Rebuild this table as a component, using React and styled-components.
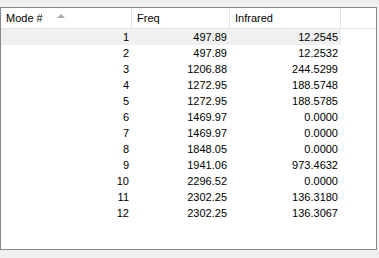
import React from "react";
import styled, { createGlobalStyle } from "styled-components";

const GlobalStyle = createGlobalStyle`
  html, body {
    margin: 0;
    padding: 0;
    background: #f0f0f0;
  }
  body {
    font-family: "Liberation Sans", Arial, sans-serif;
    font-size: 11px;
    color: #000;
  }
`;

const columns = [
  { key: "mode", title: "Mode #", width: 131, sorted: true },
  { key: "freq", title: "Freq", width: 98 },
  { key: "ir", title: "Infrared", width: 111 },
];

const rows = [
  [1, "497.89", "12.2545"],
  [2, "497.89", "12.2532"],
  [3, "1206.88", "244.5299"],
  [4, "1272.95", "188.5748"],
  [5, "1272.95", "188.5785"],
  [6, "1469.97", "0.0000"],
  [7, "1469.97", "0.0000"],
  [8, "1848.05", "0.0000"],
  [9, "1941.06", "973.4632"],
  [10, "2296.52", "0.0000"],
  [11, "2302.25", "136.3180"],
  [12, "2302.25", "136.3067"],
];

const App = () => {
  return (
    <Page>
      <GlobalStyle />
      <ListView>
        <Header>
          {columns.map((col) => (
            <HeaderCell key={col.key} $width={col.width}>
              {col.title}
              {col.sorted && <SortArrow />}
            </HeaderCell>
          ))}
          <HeaderFill />
        </Header>
        <Body>
          {rows.map((row, i) => (
            <Row key={row[0]} $selected={i === 0}>
              {row.map((val, j) => (
                <Cell key={j} $width={columns[j].width}>
                  {val}
                </Cell>
              ))}
            </Row>
          ))}
        </Body>
      </ListView>
    </Page>
  );
};

export default App;

const Page = styled.div`
  width: 379px;
  height: 258px;
  padding-top: 7px;
  box-sizing: border-box;
`;
const ListView = styled.div`
  width: 377px;
  height: 243px;
  box-sizing: border-box;
  border: 1px solid #828790;
  background: #fff;
  display: flex;
  flex-direction: column;
`;
const Header = styled.div`
  display: flex;
  height: 20px;
  border-bottom: 1px solid #e5e5e5;
  background: #fff;
`;
const HeaderCell = styled.div`
  width: ${(p) => p.$width}px;
  box-sizing: border-box;
  border-right: 1px solid #e5e5e5;
  padding-left: 5px;
  display: flex;
  align-items: center;
  position: relative;
`;
const HeaderFill = styled.div`
  flex: 1;
`;
const SortArrow = styled.span`
  position: absolute;
  left: 56px;
  top: 6px;
  width: 0;
  height: 0;
  border-left: 4px solid transparent;
  border-right: 4px solid transparent;
  border-bottom: 4px solid #a7a7a7;
`;
const Body = styled.div`
  display: flex;
  flex-direction: column;
`;
const Row = styled.div`
  display: flex;
  height: 16px;
  align-items: center;
  width: 340px;
  background: ${(p) => (p.$selected ? "#f0f0f0" : "transparent")};
`;
const Cell = styled.div`
  width: ${(p) => p.$width}px;
  box-sizing: border-box;
  text-align: right;
  padding-right: 3px;
`;
